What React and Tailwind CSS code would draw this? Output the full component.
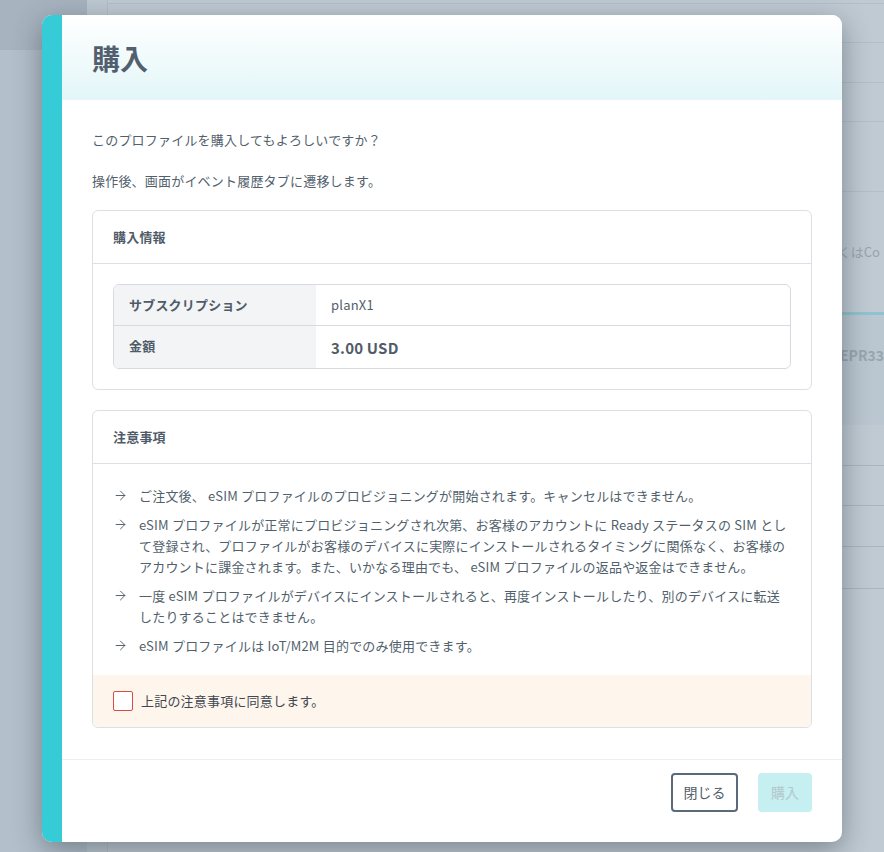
import React from "react";
import { ArrowRight } from "lucide-react";

const notes = [
    "ご注文後、 eSIM プロファイルのプロビジョニングが開始されます。キャンセルはできません。",
    "eSIM プロファイルが正常にプロビジョニングされ次第、お客様のアカウントに Ready ステータスの SIM として登録され、プロファイルがお客様のデバイスに実際にインストールされるタイミングに関係なく、お客様のアカウントに課金されます。また、いかなる理由でも、 eSIM プロファイルの返品や返金はできません。",
    "一度 eSIM プロファイルがデバイスにインストールされると、再度インストールしたり、別のデバイスに転送したりすることはできません。",
    "eSIM プロファイルは IoT/M2M 目的でのみ使用できます。",
];

function Backdrop() {
    return (
        <div className="flex h-[852px] w-full bg-[#bfcad3]">
            <div className="w-[87px] shrink-0 bg-[#b3bfca]">
                <div className="h-[50px] bg-[#a7b3bf]" />
            </div>
            <div className="w-[20px] shrink-0 bg-[#bdc8d1]" />
            <div className="flex-1 flex flex-col border-l border-[#b3bec8] pt-[3px]">
                <div className="h-[40px] border-t border-b border-[#b3bec8]" />
                <div className="h-[40px] border-b border-[#b3bec8]" />
                <div className="h-[39px] border-b border-[#b3bec8]" />
                <div className="h-[70px] border-b border-[#b3bec8]" />
                <div className="h-[120px] flex items-center justify-end pr-[4px] text-[13px] text-[#98a4ae]">
                    くはCo
                </div>
                <div className="h-[113px] border-t-[3px] border-[#8fc3cf] bg-[#bac6d0] flex items-center justify-end text-[14px] font-bold text-[#9aa5ae] pb-[30px]">
                    EPR33
                </div>
                <div className="h-[41px] border-b border-[#aab5bf]" />
                <div className="h-[40px] border-b border-[#aab5bf]" />
                <div className="h-[41px] border-b border-[#aab5bf]" />
                <div className="h-[42px] border-b border-[#aab5bf]" />
                <div className="flex-1" />
            </div>
        </div>
    );
}

export default function App() {
    return (
        <div className="relative h-[852px] w-full overflow-hidden font-['Noto_Sans_CJK_JP','Noto_Sans',sans-serif]">
            <Backdrop />

            {/* Modal */}
            <div className="absolute inset-0 pl-[42px] pt-[15px]">
                <div className="flex w-[800px] h-[827px] rounded-[10px] overflow-hidden bg-white shadow-[0_8px_28px_rgba(40,50,60,0.45)]">
                    <div className="w-[20px] shrink-0 bg-[#35cbd7]" />
                    <div className="flex-1 flex flex-col">
                        <div className="h-[85px] shrink-0 bg-linear-to-b from-white to-[#e3f6f8] px-[30px] flex items-center">
                            <h1 className="text-[28px] font-bold text-[#525f6e] leading-none">購入</h1>
                        </div>

                        <div className="flex-1 px-[30px] pt-[30px] pb-[30px] text-[13px] tracking-[0.2px] text-[#525f6c]">
                            <p className="leading-[20px] mb-[21px]">このプロファイルを購入してもよろしいですか？</p>
                            <p className="leading-[20px] mb-[19px]">操作後、画面がイベント履歴タブに遷移します。</p>

                            <div className="border border-[#dcdfe4] rounded-[6px]">
                                <div className="px-[20px] py-[16px] border-b border-[#dcdfe4] font-bold text-[13px] leading-[20px] text-[#4f5b68]">
                                    購入情報
                                </div>
                                <div className="p-[20px]">
                                    <div className="border border-[#d7dbe0] rounded-[6px] overflow-hidden">
                                        <div className="flex border-b border-[#d7dbe0]">
                                            <div className="w-[202px] shrink-0 bg-[#f3f4f6] px-[15px] py-[10px] font-bold leading-[20px] text-[#4f5b68]">
                                                サブスクリプション
                                            </div>
                                            <div className="px-[15px] py-[10px] leading-[20px] text-[#525f6c]">planX1</div>
                                        </div>
                                        <div className="flex">
                                            <div className="w-[202px] shrink-0 bg-[#f3f4f6] px-[15px] pt-[10px] pb-[12px] font-bold leading-[20px] text-[#4f5b68]">
                                                金額
                                            </div>
                                            <div className="px-[15px] pt-[11px] text-[15px] font-bold leading-[22px] text-[#4f5b68]">
                                                3.00 USD
                                            </div>
                                        </div>
                                    </div>
                                </div>
                            </div>

                            <div className="mt-[20px] border border-[#dcdfe4] rounded-[6px] overflow-hidden">
                                <div className="px-[20px] py-[16px] border-b border-[#dcdfe4] font-bold text-[13px] leading-[20px] text-[#4f5b68]">
                                    注意事項
                                </div>
                                <ul className="px-[20px] pt-[21px] pb-[19px] flex flex-col gap-[8px]">
                                    {notes.map((note, i) => (
                                        <li key={i} className="flex leading-[21px]">
                                            <ArrowRight size={15} strokeWidth={1.5} className="shrink-0 mt-[3px] text-[#4f5b68]" />
                                            <span className="ml-[11px]">{note}</span>
                                        </li>
                                    ))}
                                </ul>
                                <label className="flex items-center h-[52px] bg-[#fef5ec] px-[20px]">
                                    <span className="w-[20px] h-[20px] border border-[#e0493d] rounded-[2px] bg-white shrink-0" />
                                    <span className="ml-[8px] text-[#3f4750]">上記の注意事項に同意します。</span>
                                </label>
                            </div>
                        </div>

                        <div className="h-[83px] shrink-0 border-t border-[#eeeff1] flex justify-end items-start gap-[20px] px-[30px] pt-[13px]">
                            <button className="h-[39px] w-[67px] border-2 border-[#5a6a7b] rounded-[4px] text-[14px] text-[#525f6c] bg-white">
                                閉じる
                            </button>
                            <button className="h-[39px] w-[54px] rounded-[4px] bg-[#c5eff1] text-[14px] text-[#b5c6cb]">
                                購入
                            </button>
                        </div>
                    </div>
                </div>
            </div>
        </div>
    );
}
